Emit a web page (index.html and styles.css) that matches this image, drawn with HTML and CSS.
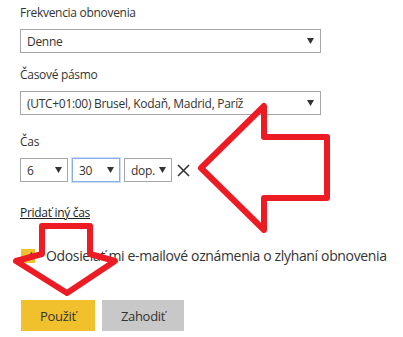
FILE: index.html
```html
<!DOCTYPE html>
<html>
<head>
    <link rel="stylesheet" href="styles.css">
</head>
<body>
    <div class="refresh-form">
        <div class="field">
            <label class="field-label">Frekvencia obnovenia</label>
            <div class="dropdown wide">
                <span class="dropdown-value">Denne</span>
                <svg class="caret" width="7" height="6" viewBox="0 0 7 6"><polygon points="0,0 7,0 3.5,6" /></svg>
            </div>
        </div>
        <div class="field">
            <label class="field-label">Časové pásmo</label>
            <div class="dropdown wide">
                <span class="dropdown-value">(UTC+01:00) Brusel, Kodaň, Madrid, Paríž</span>
                <svg class="caret" width="7" height="6" viewBox="0 0 7 6"><polygon points="0,0 7,0 3.5,6" /></svg>
            </div>
        </div>
        <div class="field time-field">
            <label class="field-label">Čas</label>
            <div class="time-row">
                <div class="dropdown small">
                    <span class="dropdown-value">6</span>
                    <svg class="caret" width="7" height="6" viewBox="0 0 7 6"><polygon points="0,0 7,0 3.5,6" /></svg>
                </div>
                <div class="dropdown small focused">
                    <span class="dropdown-value">30</span>
                    <svg class="caret" width="7" height="6" viewBox="0 0 7 6"><polygon points="0,0 7,0 3.5,6" /></svg>
                </div>
                <div class="dropdown small">
                    <span class="dropdown-value">dop.</span>
                    <svg class="caret" width="7" height="6" viewBox="0 0 7 6"><polygon points="0,0 7,0 3.5,6" /></svg>
                </div>
                <svg class="remove-time" width="13" height="13" viewBox="0 0 13 13">
                    <line x1="1" y1="1" x2="12" y2="12" />
                    <line x1="12" y1="1" x2="1" y2="12" />
                </svg>
            </div>
        </div>
        <a class="add-time" href="#">Pridať iný čas</a>
        <div class="notify-row">
            <span class="checkbox">
                <svg width="14" height="14" viewBox="0 0 14 14"><polyline points="3,7.5 6,10.5 11,3.5" /></svg>
            </span>
            <span class="notify-text">Odosielať mi e-mailové oznámenia o zlyhaní obnovenia</span>
        </div>
        <div class="buttons">
            <button class="btn apply">Použiť</button>
            <button class="btn discard">Zahodiť</button>
        </div>
    </div>

    <!-- red markers drawn over the screenshot -->
    <svg class="markers" width="403" height="337" viewBox="0 0 403 337">
        <polygon points="201,168 264,106 264,137 327,137 327,198 264,198 264,230" />
        <polygon points="42,226 90,226 90,254 115,261 67,293 16,261 42,254" />
    </svg>
</body>
</html>
```

FILE: styles.css
```css
body {
    margin: 0;
    font-family: "Open Sans", "Noto Sans", sans-serif;
    font-size: 12px;
    letter-spacing: -0.3px;
    color: #333;
    background-color: #fff;
}

.refresh-form {
    padding: 3px 0 0 20px;
}

.field {
    margin-bottom: 12px;
}

.field-label {
    display: block;
    line-height: 20px;
    margin-bottom: 6px;
}

.time-field {
    margin-top: 17px;
}

.dropdown {
    display: flex;
    align-items: center;
    justify-content: space-between;
    box-sizing: border-box;
    height: 24px;
    padding: 0 6px 0 6px;
    border: 1px solid #a6a6a6;
    background-color: #fff;
    white-space: nowrap;
}

.dropdown.wide {
    width: 301px;
}

.dropdown.small {
    width: 48px;
    padding-right: 5px;
}

.dropdown.focused {
    border-color: #86aee8;
    box-shadow: 0 0 0 1px #cddff7;
}

.caret {
    fill: #333;
}

.time-row {
    display: flex;
    align-items: center;
    gap: 4px;
}

.remove-time {
    margin-left: 1px;
    stroke: #333;
    stroke-width: 1.6;
}

.add-time {
    display: inline-block;
    margin-top: 9px;
    line-height: 20px;
    color: #222;
}

.notify-row {
    display: flex;
    align-items: center;
    gap: 11px;
    margin-top: 23px;
    line-height: 20px;
    font-size: 14px;
    letter-spacing: -0.35px;
}

.checkbox {
    display: flex;
    flex-shrink: 0;
    width: 14px;
    height: 14px;
    margin-left: 1px;
    background-color: #f0c12c;
}

.checkbox svg {
    fill: none;
    stroke: #333;
    stroke-width: 1.4;
}

.buttons {
    display: flex;
    gap: 7px;
    margin-top: 34px;
    padding-left: 1px;
}

.btn {
    height: 31px;
    border: none;
    font-family: inherit;
    font-size: 13px;
    letter-spacing: -0.3px;
    color: #333;
    cursor: pointer;
}

.apply {
    width: 74px;
    background-color: #f0c12c;
}

.discard {
    width: 82px;
    background-color: #c8c8c8;
}

.markers {
    position: absolute;
    top: 0;
    left: 0;
    fill: none;
    stroke: #ed1c24;
    stroke-width: 6;
    stroke-linejoin: round;
}
```
